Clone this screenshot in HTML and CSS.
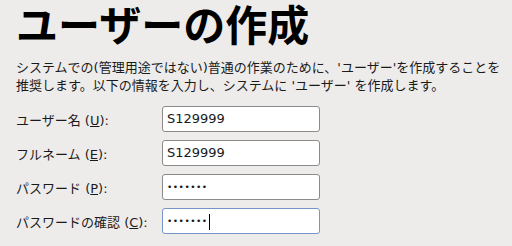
FILE: index.html
```html
<!DOCTYPE html>
<html lang="ja">
<head>
    <meta charset="UTF-8">
    <title>ユーザーの作成</title>
    <link rel="stylesheet" href="styles.css">
</head>
<body>
    <div class="page">
        <h1>ユーザーの作成</h1>
        <p class="intro">システムでの(管理用途ではない)普通の作業のために、'ユーザー'を作成することを<br>推奨します。以下の情報を入力し、システムに 'ユーザー' を作成します。</p>
        <form class="fields">
            <label>ユーザー名 (<u>U</u>):</label>
            <div class="entry">S129999</div>

            <label>フルネーム (<u>E</u>):</label>
            <div class="entry">S129999</div>

            <label>パスワード (<u>P</u>):</label>
            <div class="entry dots">•••••••</div>

            <label>パスワードの確認 (<u>C</u>):</label>
            <div class="entry dots focus">•••••••<span class="caret"></span></div>
        </form>
    </div>
</body>
</html>
```

FILE: styles.css
```css
body {
    margin: 0;
    background-color: #edeceb;
    color: #1a1a1a;
    font-family: "DejaVu Sans", "Noto Sans CJK JP", sans-serif;
}
.page {
    padding: 0 4px 0 16px;
}
h1 {
    margin: 0;
    font-family: "Noto Sans CJK JP", sans-serif;
    font-size: 42px;
    font-weight: bold;
    line-height: 46px;
    color: #000;
}
.intro {
    margin: 13px 0 11px 0;
    font-size: 13px;
    line-height: 18px;
    white-space: nowrap;
}
.fields {
    display: grid;
    grid-template-columns: 146px 158px;
    row-gap: 8px;
    align-items: center;
    font-size: 13px;
}
.fields label {
    white-space: nowrap;
}
.entry {
    height: 24px;
    line-height: 24px;
    padding: 0 4px;
    background-color: #fff;
    border: 1px solid #8c8b89;
    border-radius: 3px;
    white-space: nowrap;
}
.dots {
    font-size: 9px;
    letter-spacing: 0.5px;
}
.focus {
    border-color: #7596c9;
}
.caret {
    display: inline-block;
    width: 1px;
    height: 16px;
    margin-left: 1px;
    vertical-align: middle;
    background-color: #000;
}
```
